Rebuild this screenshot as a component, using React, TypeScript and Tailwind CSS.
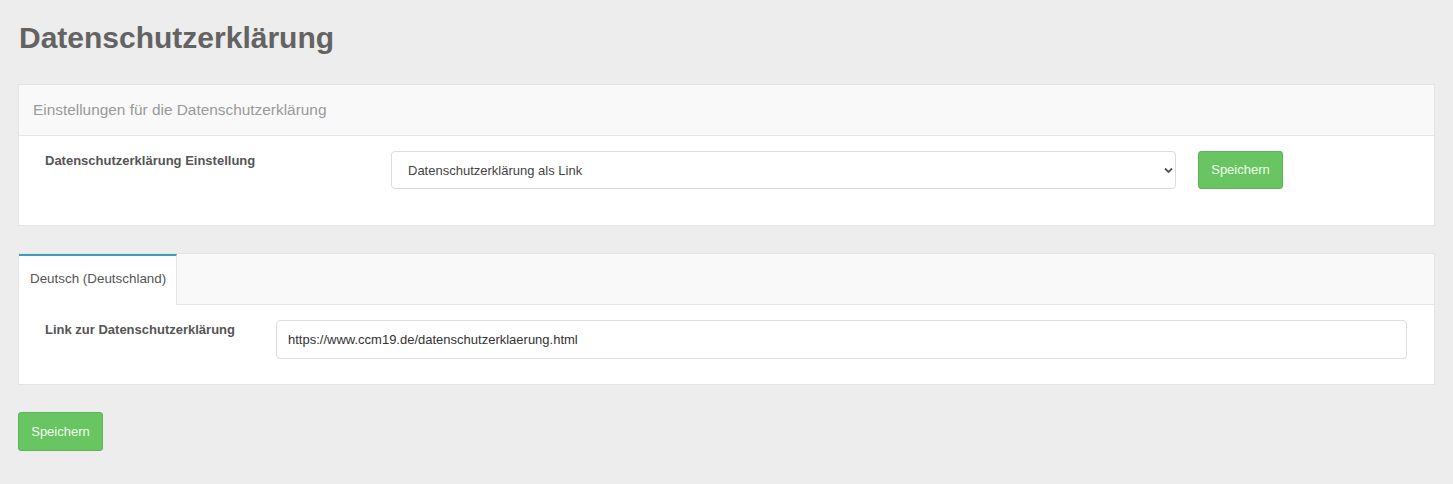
import React from "react";

const font = { fontFamily: '"Liberation Sans", Arial, sans-serif' };

export default function App() {
  return (
    <div className="min-h-[484px] bg-[#ededed] px-[18px] pt-[19px] pb-8" style={font}>
      <h1 className="text-[30px] leading-[38px] font-bold text-[#636363] pl-px">Datenschutzerklärung</h1>

      <div className="mt-[27px] border border-[#e3e3e3] bg-white">
        <div className="h-[51px] flex items-center px-[14px] bg-[#f9f9f9] border-b border-[#e6e6e6] text-[15.4px] text-[#9a9a9a]">
          Einstellungen für die Datenschutzerklärung
        </div>
        <div className="flex items-start pl-[26px] pt-[15px] pb-[36px]">
          <div className="w-[346px] pt-[2px] text-[13px] font-bold text-[#555] leading-[16px]">Datenschutzerklärung Einstellung</div>
          <div className="relative w-[785px]">
            <select className="w-full h-[38px] appearance-none border border-[#dcdcdc] rounded-[4px] bg-white pl-4 pt-px text-[13px] text-[#444] outline-none" style={font} defaultValue="link">
              <option value="link">Datenschutzerklärung als Link</option>
            </select>
            <svg className="absolute right-[3px] top-[16px] pointer-events-none" width="9" height="7" viewBox="0 0 9 7">
              <path d="M1 1.5 L4.5 5 L8 1.5" fill="none" stroke="#555" strokeWidth="1.8" />
            </svg>
          </div>
          <button className="ml-[22px] w-[85px] h-[38px] bg-[#69c462] border border-[#5cb555] rounded-[3px] text-[13px] text-[#f0fff0]" style={font}>Speichern</button>
        </div>
      </div>

      <div className="mt-[27px] border border-[#e3e3e3] bg-white">
        <div className="h-[51px] flex bg-[#f9f9f9] border-b border-[#e6e6e6]">
          <div className="w-[158px] h-[51px] -mb-px bg-white border-t-2 border-t-[#3c9fb6] border-r border-r-[#e3e3e3] flex items-center pl-[11px] pb-[3px] text-[13.4px] text-[#555]">
            Deutsch (Deutschland)
          </div>
        </div>
        <div className="flex items-start pl-[26px] pt-[15px] pb-[25px]">
          <div className="w-[231px] pt-[2px] text-[13px] font-bold text-[#555] leading-[16px]">Link zur Datenschutzerklärung</div>
          <input
            className="w-[1131px] h-[39px] border border-[#dcdcdc] rounded-[4px] bg-white px-[11px] text-[13px] text-[#333] outline-none"
            style={font}
            defaultValue="https://www.ccm19.de/datenschutzerklaerung.html"
          />
        </div>
      </div>

      <button className="mt-[27px] w-[85px] h-[39px] bg-[#69c462] border border-[#5cb555] rounded-[3px] text-[13px] text-[#f0fff0]" style={font}>Speichern</button>
    </div>
  );
}
